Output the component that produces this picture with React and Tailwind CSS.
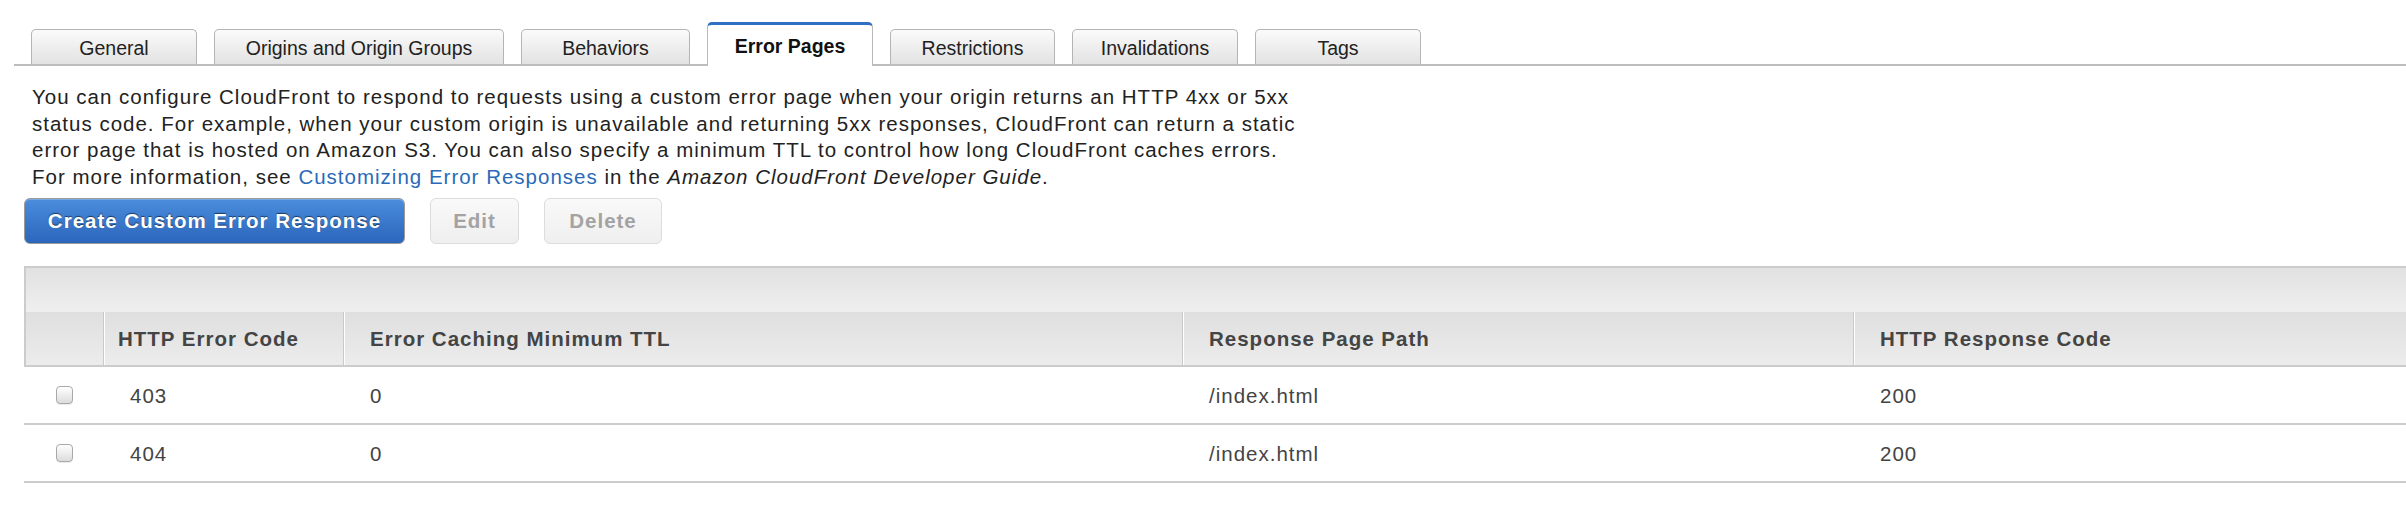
import React from "react";

const tabs = [
  { label: "General", w: "w-[166px]" },
  { label: "Origins and Origin Groups", w: "w-[290px]" },
  { label: "Behaviors", w: "w-[169px]" },
  { label: "Error Pages", w: "w-[166px]", active: true },
  { label: "Restrictions", w: "w-[165px]" },
  { label: "Invalidations", w: "w-[166px]" },
  { label: "Tags", w: "w-[166px]" },
];

const rows = [
  { code: "403", ttl: "0", path: "/index.html", resp: "200" },
  { code: "404", ttl: "0", path: "/index.html", resp: "200" },
];

const Checkbox = () => (
  <span className="block w-[17px] h-[18px] rounded-[4px] border border-[#a9a9a9] bg-gradient-to-b from-[#ffffff] to-[#dcdcdc] shadow-[0_1px_0_rgba(0,0,0,0.08)]" />
);

export default function App() {
  return (
    <div className="w-[2406px] h-[506px] bg-white overflow-hidden font-['Liberation_Sans',Arial,sans-serif] text-[19.5px] text-[#222]">
      {/* Tabs */}
      <div className="ml-[14px] pt-[22px] pl-[17px] flex items-end gap-[17px] border-b-2 border-[#bdbdbd]">
        {tabs.map((t) =>
          t.active ? (
            <div
              key={t.label}
              className={`${t.w} h-[44px] -mb-[2px] bg-white border-x border-[#b8b8b8] border-t-[3px] border-t-[#2f6fc4] rounded-t-[5px] flex items-center justify-center pt-[3px] font-bold text-[#111]`}
            >
              {t.label}
            </div>
          ) : (
            <div
              key={t.label}
              className={`${t.w} h-[35px] border-x border-t border-[#b5b5b5] rounded-t-[5px] bg-gradient-to-b from-[#fbfbfb] to-[#e2e2e2] flex items-center justify-center pt-[3px]`}
            >
              {t.label}
            </div>
          )
        )}
      </div>

      {/* Description */}
      <p className="ml-[32px] mt-[18px] text-[20.5px] tracking-[1px] leading-[26.5px] whitespace-nowrap">
        You can configure CloudFront to respond to requests using a custom error page when your origin returns an HTTP 4xx or 5xx
        <br />
        status code. For example, when your custom origin is unavailable and returning 5xx responses, CloudFront can return a static
        <br />
        error page that is hosted on Amazon S3. You can also specify a minimum TTL to control how long CloudFront caches errors.
        <br />
        For more information, see <a className="text-[#2a6ab8]">Customizing Error Responses</a> in the{" "}
        <i>Amazon CloudFront Developer Guide</i>.
      </p>

      {/* Buttons */}
      <div className="ml-[24px] mt-[8px] flex gap-[25px] text-[20.5px] tracking-[1px]">
        <button className="w-[381px] h-[46px] rounded-[6px] border border-[#9a9a9a] bg-gradient-to-b from-[#4b8ddd] to-[#2b66bb] shadow-[inset_0_1px_0_rgba(255,255,255,0.25)] text-white font-bold [text-shadow:0_-1px_1px_rgba(0,0,0,0.55)]">
          Create Custom Error Response
        </button>
        <button className="w-[89px] h-[46px] rounded-[6px] border border-[#dcdcdc] bg-gradient-to-b from-[#f9f9f9] to-[#efefef] text-[#a3a3a3] font-bold">
          Edit
        </button>
        <button className="w-[118px] h-[46px] rounded-[6px] border border-[#dcdcdc] bg-gradient-to-b from-[#f9f9f9] to-[#efefef] text-[#a3a3a3] font-bold">
          Delete
        </button>
      </div>

      {/* Table */}
      <div className="ml-[24px] mt-[22px] text-[20.5px] tracking-[1px]">
        <div className="border-l-2 border-t-2 border-b-2 border-[#cccccc]">
          <div className="h-[44px] bg-gradient-to-b from-[#e1e1e1] to-[#efefef]" />
          <div className="h-[53px] grid grid-cols-[77px_240px_839px_671px_1fr] bg-gradient-to-b from-[#dfdfdf] to-[#ececec] font-bold text-[#444]">
            <div />
            <div className="border-l border-[#c9c9c9] shadow-[inset_1px_0_0_#ffffff] flex items-center pl-[14px] pt-[2px]">HTTP Error Code</div>
            <div className="border-l border-[#c9c9c9] shadow-[inset_1px_0_0_#ffffff] flex items-center pl-[26px] pt-[2px]">Error Caching Minimum TTL</div>
            <div className="border-l border-[#c9c9c9] shadow-[inset_1px_0_0_#ffffff] flex items-center pl-[26px] pt-[2px]">Response Page Path</div>
            <div className="border-l border-[#c9c9c9] shadow-[inset_1px_0_0_#ffffff] flex items-center pl-[26px] pt-[2px]">HTTP Response Code</div>
          </div>
        </div>
        {rows.map((r) => (
          <div
            key={r.code}
            className="h-[58px] grid grid-cols-[79px_240px_839px_671px_1fr] border-b-2 border-[#cccccc] text-[#444]"
          >
            <div className="flex items-center justify-center pl-[2px]">
              <Checkbox />
            </div>
            <div className="flex items-center pl-[27px] pt-[2px]">{r.code}</div>
            <div className="flex items-center pl-[27px] pt-[2px]">{r.ttl}</div>
            <div className="flex items-center pl-[27px] pt-[2px]">{r.path}</div>
            <div className="flex items-center pl-[27px] pt-[2px]">{r.resp}</div>
          </div>
        ))}
      </div>
    </div>
  );
}
